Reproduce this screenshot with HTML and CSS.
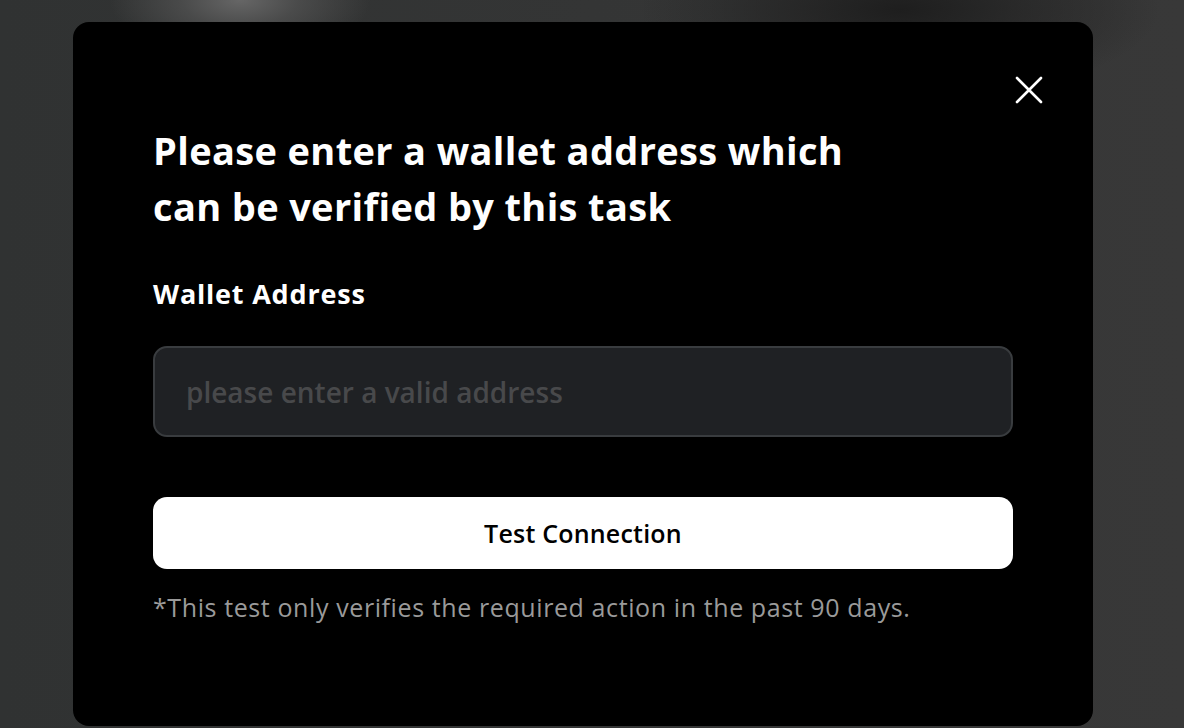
FILE: index.html
```html
<!DOCTYPE html>
<html lang="en">
<head>
    <meta charset="UTF-8">
    <meta name="viewport" content="width=device-width, initial-scale=1.0">
    <title>Wallet Address</title>
    <link rel="stylesheet" href="styles.css">
</head>
<body>
    <!-- Modal -->
    <div class="modal">
        <div class="modal-top">
            <button class="close-btn" aria-label="Close">
                <svg width="28" height="28" viewBox="0 0 28 28" fill="none" stroke="#fff" stroke-width="2.6" stroke-linecap="round">
                    <path d="M2 2 L26 26 M26 2 L2 26"/>
                </svg>
            </button>
        </div>

        <h1 class="title">Please enter a wallet address which<br>can be verified by this task</h1>

        <label class="label" for="wallet">Wallet Address</label>
        <input type="text" id="wallet" class="input" placeholder="please enter a valid address">

        <button class="test-btn">Test Connection</button>

        <p class="note">*This test only verifies the required action in the past 90 days.</p>
    </div>
</body>
</html>
```

FILE: styles.css
```css
/* Pagina achtergrond */
body {
    margin: 0;
    height: 728px;
    overflow: hidden;
    font-family: "Open Sans", "Noto Sans", sans-serif;
    background-color: #333435;
    background-image:
        radial-gradient(ellipse 130px 60px at 240px 0, #666 0%, rgba(90, 90, 90, 0.6) 45%, rgba(51, 52, 53, 0) 100%),
        radial-gradient(ellipse 260px 90px at 900px 10px, #1e1e1e 0%, rgba(30, 30, 30, 0) 100%),
        linear-gradient(90deg, #303232 0%, #383838 100%);
    box-sizing: border-box;
    padding-top: 22px;
}

/* Modal */
.modal {
    margin-left: 73px;
    width: 1020px;
    height: 704px;
    box-sizing: border-box;
    background-color: #000;
    border-radius: 16px;
    padding: 0 80px;
    color: #fff;
}

.modal-top {
    display: flex;
    justify-content: flex-end;
    padding-top: 54px;
    margin-right: -30px;
    height: 28px;
}

.close-btn {
    background: none;
    border: none;
    padding: 0;
    width: 28px;
    height: 28px;
    cursor: pointer;
}

.title {
    margin: 0;
    margin-top: 18px;
    font-size: 38px;
    line-height: 56px;
    font-weight: 700;
    letter-spacing: 0.35px;
}

.label {
    display: block;
    margin-top: 40px;
    font-size: 27px;
    line-height: 40px;
    font-weight: 700;
    letter-spacing: 0.8px;
}

.input {
    display: block;
    box-sizing: border-box;
    width: 100%;
    height: 91px;
    margin-top: 32px;
    padding: 0 31px;
    background-color: #1f2124;
    border: 2px solid #393c3f;
    border-radius: 14px;
    font-family: inherit;
    font-size: 28px;
    font-weight: 600;
    color: #fff;
    outline: none;
}

.input::placeholder {
    color: #48494b;
}

.test-btn {
    display: block;
    width: 100%;
    height: 72px;
    margin-top: 60px;
    background-color: #fff;
    border: none;
    border-radius: 14px;
    font-family: inherit;
    font-size: 25px;
    font-weight: 600;
    letter-spacing: 0.2px;
    color: #000;
    cursor: pointer;
}

.note {
    margin: 22px 0 0;
    font-size: 25px;
    line-height: 32px;
    letter-spacing: 0.6px;
    color: #9a9a9a;
}
```
